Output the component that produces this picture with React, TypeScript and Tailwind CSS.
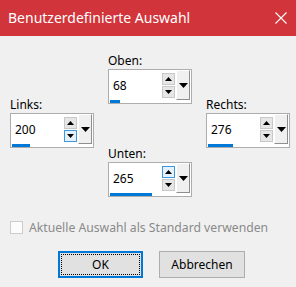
import clsx from 'clsx'

interface SpinProps {
  label: string
  value: number
  bar: number
  hot?: 'up' | 'down'
}

function Arrow({ dir }: { dir: 'up' | 'down' }) {
  return (
    <svg width="7" height="4" viewBox="0 0 7 4" className="block">
      {dir === 'up'
        ? <polygon points="0,4 7,4 3.5,0" fill="#000" />
        : <polygon points="0,0 7,0 3.5,4" fill="#000" />}
    </svg>
  )
}

function SpinBox({ label, value, bar, hot }: SpinProps) {
  return (
    <div className="flex flex-col w-[84px]">
      <div className="h-[16px] leading-[16px] text-[12px] text-black">{label}</div>
      <div className="flex h-[35px] w-[84px] border border-[#adadad] bg-white">
        <div className="relative w-[53px] h-full">
          <span className="absolute left-[4px] top-[8px] leading-[16px] text-[12px] text-black">{value}</span>
          <div className="absolute left-[1px] bottom-0 h-[3px] bg-[#0078d7]" style={{ width: bar }} />
        </div>
        <div className="flex flex-col w-[13px] pt-[3px] gap-[1px]">
          <div
            className={clsx(
              'flex h-[12px] items-center justify-center border',
              hot === 'up' ? 'border-[#3c98e0] bg-[#e5f1fb]' : 'border-[#c8c8c8] bg-[#e6e6e6]'
            )}
          >
            <Arrow dir="up" />
          </div>
          <div
            className={clsx(
              'flex h-[12px] items-center justify-center border',
              hot === 'down' ? 'border-[#3c98e0] bg-[#e5f1fb]' : 'border-[#c8c8c8] bg-[#e6e6e6]'
            )}
          >
            <Arrow dir="down" />
          </div>
        </div>
        <div className="ml-[1px] flex h-[30px] w-[14px] items-center justify-center border-t border-l border-t-white border-l-white border-r border-b border-r-[#8e8e8e] border-b-[#8e8e8e] bg-[#f0f0f0]">
          <svg width="9" height="5" viewBox="0 0 9 5" className="block">
            <polygon points="0,0 9,0 4.5,5" fill="#000" />
          </svg>
        </div>
      </div>
    </div>
  )
}

export default function App() {
  return (
    <div className="w-[296px] h-[287px] bg-[#f0f0f0] font-['Noto_Sans','Open_Sans',sans-serif] overflow-hidden">
      <div className="flex h-[36px] items-center justify-between bg-[#d1343a] pl-[8px] pr-[9px]">
        <span className="text-[14px] text-white leading-[20px]">Benutzerdefinierte Auswahl</span>
        <svg width="12" height="12" viewBox="0 0 12 12" className="block">
          <path d="M0.5 0.5 L11.5 11.5 M11.5 0.5 L0.5 11.5" stroke="#fff" strokeWidth="1.1" />
        </svg>
      </div>

      <div className="flex flex-col h-[251px]">
        <div className="flex px-[10px] gap-[14px] pt-[17px]">
          <div className="mt-[44px]">
            <SpinBox label="Links:" value={200} bar={18} hot="down" />
          </div>
          <div className="flex flex-col gap-[42px]">
            <SpinBox label="Oben:" value={68} bar={10} />
            <SpinBox label="Unten:" value={265} bar={42} hot="up" />
          </div>
          <div className="mt-[44px]">
            <SpinBox label="Rechts:" value={276} bar={25} />
          </div>
        </div>

        <div className="flex items-center gap-[6px] pl-[10px] mt-[24px] h-[13px]">
          <div className="w-[13px] h-[13px] border border-[#cccccc] bg-[#fcfcfc]" />
          <span className="text-[12.2px] leading-[16px] text-[#8a8a8a]">Aktuelle Auswahl als Standard verwenden</span>
        </div>

        <div className="flex pl-[58px] gap-[16px] mt-[17px]">
          <div className="flex h-[27px] w-[85px] border-2 border-[#0078d7] bg-[#e1e1e1] p-[1px]">
            <div className="flex flex-1 items-center justify-center border border-dotted border-black text-[12px] text-black">
              OK
            </div>
          </div>
          <div className="flex h-[27px] w-[86px] items-center justify-center border border-[#adadad] bg-[#e1e1e1] text-[12px] text-black">
            Abbrechen
          </div>
        </div>
      </div>
    </div>
  )
}
